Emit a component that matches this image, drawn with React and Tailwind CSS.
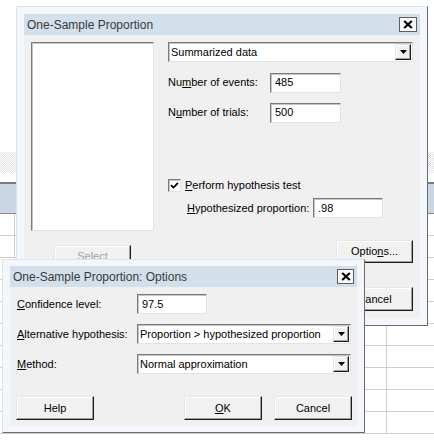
const sunken =
  'border border-t-[#7a7a7a] border-l-[#7a7a7a] border-r-[#e3e3e3] border-b-[#e3e3e3] bg-white shadow-[inset_1px_1px_0_#c4c4c4]'
const raised =
  'border border-t-[#e6e6e6] border-l-[#e6e6e6] border-r-[#1c1c1c] border-b-[#1c1c1c] bg-[#f1f1f1] shadow-[inset_-1px_-1px_0_#a0a0a0,inset_1px_1px_0_#ffffff]'

function CloseBox({ w }) {
  return (
    <div
      className={`flex h-[15px] ${w} items-center justify-center border border-[#5e5e5e] bg-[#f8f8f8]`}
    >
      <svg width="10" height="9" viewBox="0 0 10 9">
        <path d="M1.2 1 L8.8 8 M8.8 1 L1.2 8" stroke="#000" strokeWidth="2.2" fill="none" />
      </svg>
    </div>
  )
}

function Arrow() {
  return (
    <div className={`mr-[1px] flex h-[16px] w-[16px] items-center justify-center ${raised}`}>
      <svg width="7" height="4" viewBox="0 0 7 4">
        <path d="M0 0 H7 L3.5 4 Z" fill="#000" />
      </svg>
    </div>
  )
}

function Dropdown({ w, children }) {
  return (
    <div className={`flex h-[20px] ${w} items-center ${sunken}`}>
      <span className="flex-1 truncate pl-[2px]">{children}</span>
      <Arrow />
    </div>
  )
}

function Field({ w, children }) {
  return <div className={`flex h-[20px] ${w} items-center pl-[4px] ${sunken}`}>{children}</div>
}

function Button({ w, h = 'h-[24px]', disabled, children }) {
  return (
    <div
      className={`flex ${h} ${w} items-center justify-center ${raised} ${disabled ? 'text-[#a3a3a3]' : ''}`}
    >
      {children}
    </div>
  )
}

function Window({ title, closeW, className, children }) {
  return (
    <div
      className={`absolute flex flex-col border border-t-[#dde3ea] border-l-[#dde3ea] border-r-[#6b6b6b] border-b-[#6b6b6b] bg-[#f3f6fa] ${className}`}
    >
      <div className="flex h-[21px] shrink-0 items-center justify-between bg-[#d3dfeb] pr-[3px] pl-[3px]">
        <span className="text-[12px] text-[#3a3a3a]">{title}</span>
        <CloseBox w={closeW} />
      </div>
      <div className="flex-1 bg-[#f0f0f0]">{children}</div>
    </div>
  )
}

function Sheet() {
  const rows = Array.from({ length: 10 })
  const cols = Array.from({ length: 7 })
  return (
    <div className="flex h-full flex-col">
      <div className="h-[152px] bg-white" />
      <div className="h-[21px] bg-[repeating-conic-gradient(#e2e2e2_0%_25%,#ffffff_0%_50%)] bg-[length:2px_2px]" />
      <div className="h-[9px] bg-white" />
      <div className="h-[2px] bg-[#7c7c7c]" />
      <div className="h-[29px] bg-[#c9d6e4]" />
      <div className="h-[1px] bg-[#8a8a8a]" />
      {rows.map((_, i) => (
        <div key={i} className="flex h-[22px] shrink-0 border-b border-[#cfcfcf] bg-white">
          <div className="w-[15px] shrink-0 border-r border-[#cfcfcf]" />
          {cols.map((_, j) => (
            <div key={j} className="w-[62px] shrink-0 border-r border-[#cfcfcf]" />
          ))}
        </div>
      ))}
    </div>
  )
}

export default function App() {
  return (
    <div className="relative h-[440px] w-[434px] overflow-hidden bg-white font-['Liberation_Sans',Arial,sans-serif] text-[11px] text-black">
      <Sheet />

      <Window
        title="One-Sample Proportion"
        closeW="w-[18px]"
        className="top-[6px] left-[16px] h-[320px] w-[412px] px-[7px] pt-[7px] pb-[7px]"
      >
        <div className="flex pt-[7px] pl-[7px]">
          <div className="flex w-[123px] flex-col">
            <div className={`h-[189px] ${sunken}`} />
            <div className="mt-[14px] ml-[23px]">
              <Button w="w-[77px]" h="h-[23px]" disabled>
                Select
              </Button>
            </div>
          </div>

          <div className="ml-[14px] flex w-[245px] flex-col">
            <Dropdown w="w-[245px]">Summarized data</Dropdown>

            <div className="mt-[11px] flex h-[19px] items-center">
              <span className="w-[102px]">
                Nu<u className="underline-offset-1">m</u>ber of events:
              </span>
              <Field w="w-[71px]">485</Field>
            </div>
            <div className="mt-[11px] flex h-[19px] items-center">
              <span className="w-[102px]">
                N<u className="underline-offset-1">u</u>mber of trials:
              </span>
              <Field w="w-[71px]">500</Field>
            </div>

            <div className="mt-[57px] flex h-[13px] items-center">
              <div className={`flex h-[13px] w-[13px] items-center justify-center ${sunken}`}>
                <svg width="9" height="9" viewBox="0 0 9 9">
                  <path d="M1 4.2 L3.4 6.6 L8 2" stroke="#000" strokeWidth="1.8" fill="none" />
                </svg>
              </div>
              <span className="ml-[4px]">
                <u className="underline-offset-1">P</u>erform hypothesis test
              </span>
            </div>
            <div className="mt-[6px] flex h-[20px] items-center pl-[19px]">
              <span className="w-[126px]">
                <u className="underline-offset-1">H</u>ypothesized proportion:
              </span>
              <Field w="w-[70px]">.98</Field>
            </div>

            <div className="mt-[22px] self-end">
              <Button w="w-[77px]" h="h-[23px]">
                Optio<u className="underline-offset-1">n</u>s...
              </Button>
            </div>
            <div className="mt-[24px] self-end">
              <Button w="w-[77px]">Cancel</Button>
            </div>
          </div>
        </div>
      </Window>

      <Window
        title="One-Sample Proportion: Options"
        closeW="w-[17px]"
        className="top-[259px] left-[2px] h-[174px] w-[363px] px-[7px] pt-[6px] pb-[6px]"
      >
        <div className="flex flex-col pt-[7px] pl-[7px]">
          <div className="flex h-[20px] items-center">
            <span className="w-[120px]">
              <u className="underline-offset-1">C</u>onfidence level:
            </span>
            <Field w="w-[70px]">97.5</Field>
          </div>
          <div className="mt-[10px] flex h-[20px] items-center">
            <span className="w-[120px]">
              <u className="underline-offset-1">A</u>lternative hypothesis:
            </span>
            <Dropdown w="w-[214px]">Proportion &gt; hypothesized proportion</Dropdown>
          </div>
          <div className="mt-[10px] flex h-[20px] items-center">
            <span className="w-[120px]">
              <u className="underline-offset-1">M</u>ethod:
            </span>
            <Dropdown w="w-[214px]">Normal approximation</Dropdown>
          </div>
          <div className="mt-[22px] -ml-[1px] flex">
            <Button w="w-[78px]">Help</Button>
            <div className="ml-[90px]">
              <Button w="w-[78px]">
                <u className="underline-offset-1">O</u>K
              </Button>
            </div>
            <div className="ml-[12px]">
              <Button w="w-[78px]">Cancel</Button>
            </div>
          </div>
        </div>
      </Window>
    </div>
  )
}
